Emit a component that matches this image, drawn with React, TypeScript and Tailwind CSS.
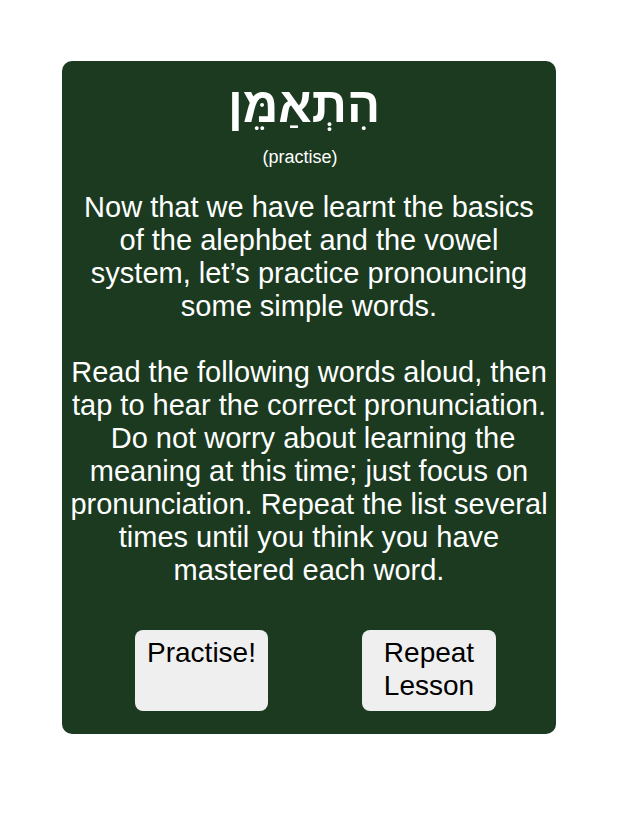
export default function App() {
  return (
    <div className="min-h-[826px] w-full bg-white pt-[61px]" style={{ fontFamily: '"Liberation Sans", Arial, sans-serif' }}>
      <div className="mx-[62px] flex h-[673px] flex-col items-center rounded-[10px] bg-[#1b3a1f] text-white">
        <h1 dir="rtl" className="mt-[14px] pr-[10px] text-[49px] font-bold leading-[60px]">
          הִתְאַמֵּן
        </h1>
        <p className="mt-[12px] pr-[18px] text-[18px] leading-[20px]">(practise)</p>

        <div className="mt-[24px] text-center text-[29px] leading-[33px]">
          <p>Now that we have learnt the basics</p>
          <p>of the alephbet and the vowel</p>
          <p>system, let’s practice pronouncing</p>
          <p>some simple words.</p>
          <p className="mt-[33px]">Read the following words aloud, then</p>
          <p>tap to hear the correct pronunciation.</p>
          <p className="whitespace-pre"> Do not worry about learning the</p>
          <p>meaning at this time; just focus on</p>
          <p>pronunciation. Repeat the list several</p>
          <p>times until you think you have</p>
          <p>mastered each word.</p>
        </div>

        <div className="mt-[43px] flex w-full justify-between pl-[73px] pr-[60px]">
          <button className="flex h-[81px] w-[133px] items-start justify-center rounded-[8px] bg-[#efefef] pt-[6px] text-[28px] leading-[33px] text-black">
            Practise!
          </button>
          <button className="flex h-[81px] w-[134px] items-start justify-center rounded-[8px] bg-[#efefef] pt-[6px] text-center text-[28px] leading-[33px] text-black">
            Repeat
            <br />
            Lesson
          </button>
        </div>
      </div>
    </div>
  );
}
